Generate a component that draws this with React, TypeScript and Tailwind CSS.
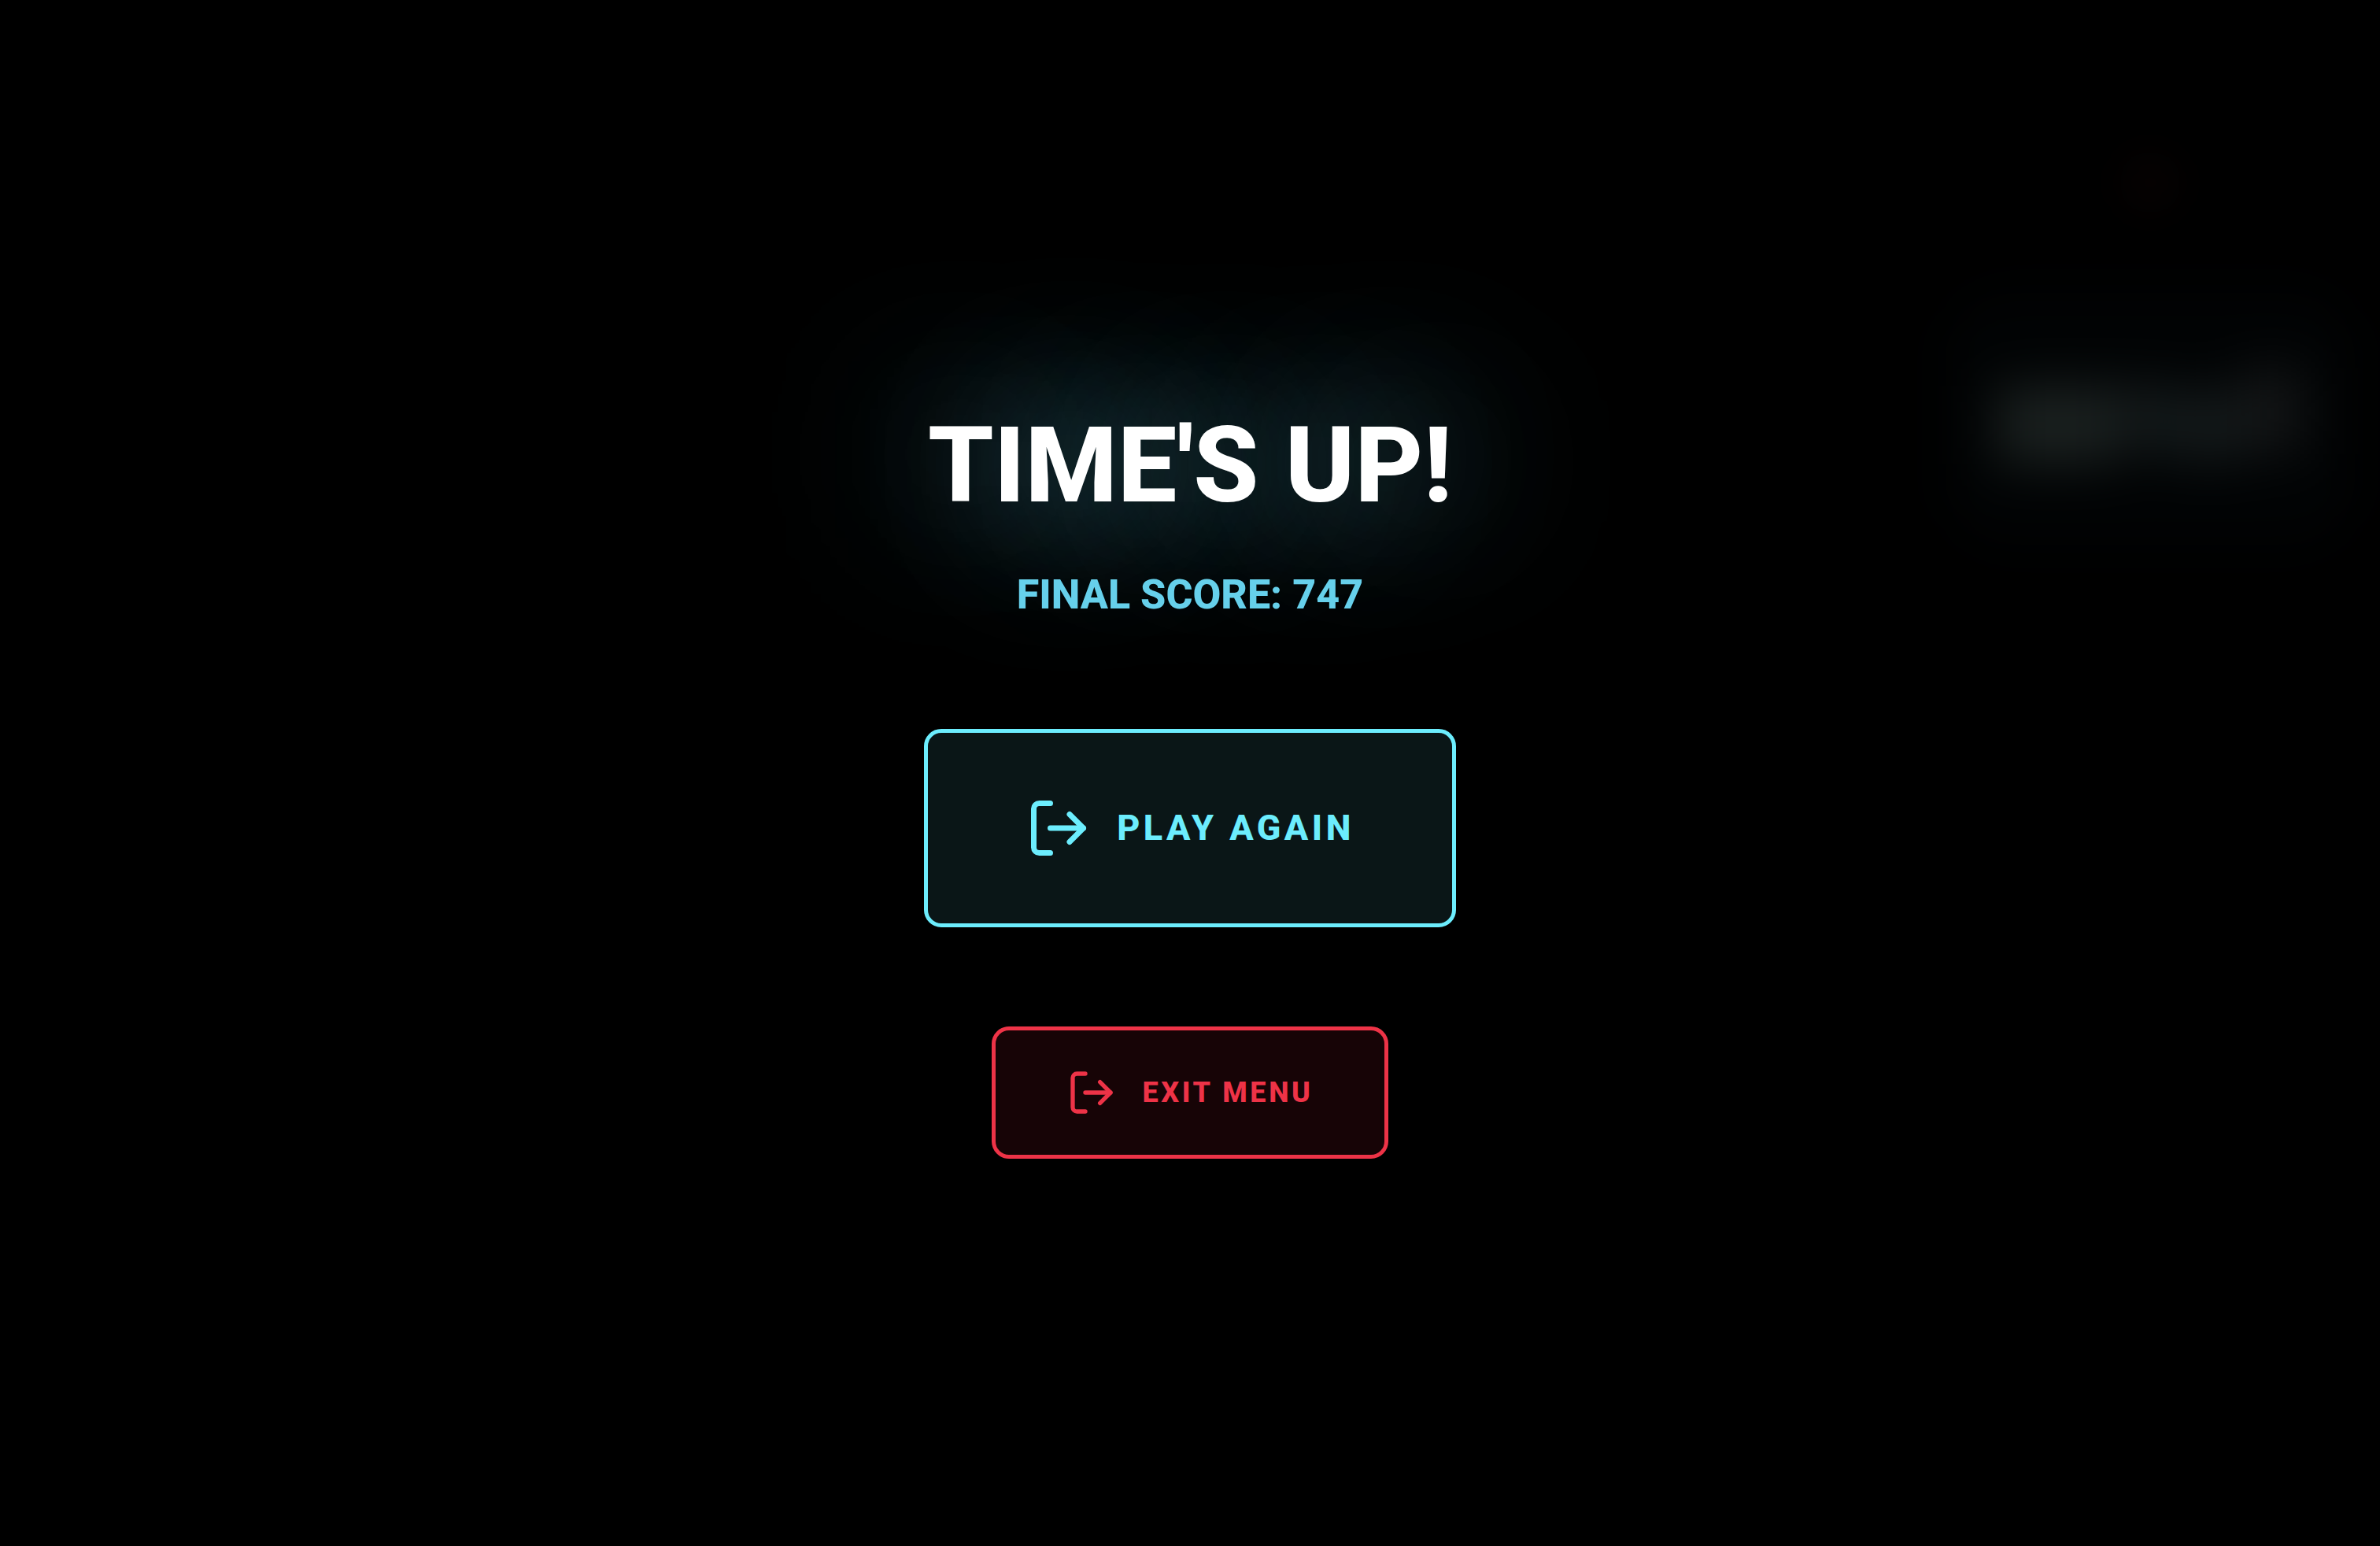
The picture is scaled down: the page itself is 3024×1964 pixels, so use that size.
import React from 'react';
import { LogOut } from 'lucide-react';

const FINAL_SCORE = 747;

// Scoreboard left over from the round, out of focus behind the overlay
const BlurredHud: React.FC = () => (
  <div aria-hidden="true" className="absolute inset-y-0 right-0 flex flex-col items-center gap-[100px] pt-48 pr-8 pointer-events-none">
    <div className="w-20 h-20 rounded-full bg-[#050101] blur-[20px]" />
    <div className="w-[520px] h-[320px] flex items-center justify-center rounded-[80px] bg-[#010304] blur-[32px]">
      <div className="w-[150px] h-[100px] mt-4 bg-[#1a201f]" />
      <div className="w-20 h-[90px] bg-[#121718]" />
      <div className="w-20 h-[90px] mt-5 bg-[#13191a]" />
      <div className="w-20 h-[110px] mb-5 bg-[#121415]" />
    </div>
  </div>
);

const App: React.FC = () => {
  return (
    <div className="relative min-h-screen bg-black overflow-hidden flex flex-col items-center justify-center font-['Roboto',sans-serif] font-extrabold uppercase">
      <BlurredHud />

      <main className="relative flex flex-col items-center">
        <header className="flex flex-col items-center gap-7 text-center">
          <h1 className="text-[134px] leading-[200px] text-white [text-shadow:0_0_200px_rgba(110,210,240,0.85)]">
            Time's Up!
          </h1>
          <p className="text-[52px] leading-[72px] text-[#66d0eb]">
            Final Score: {FINAL_SCORE}
          </p>
        </header>

        <div className="mt-[134px] flex flex-col items-center gap-[126px]">
          <button
            type="button"
            className="h-[252px] px-[124px] flex items-center gap-8 rounded-[22px] border-5 border-[#6cedfd] bg-[#0a1617] text-[#6cedfd] text-[45px] tracking-widest uppercase"
          >
            <LogOut size={84} />
            Play Again
          </button>

          <button
            type="button"
            className="h-[168px] px-[90px] flex items-center gap-8 rounded-[22px] border-5 border-[#ee3347] bg-[#170406] text-[#ee3347] text-[36px] tracking-widest uppercase"
          >
            <LogOut size={64} />
            Exit Menu
          </button>
        </div>
      </main>
    </div>
  );
};

export default App;
